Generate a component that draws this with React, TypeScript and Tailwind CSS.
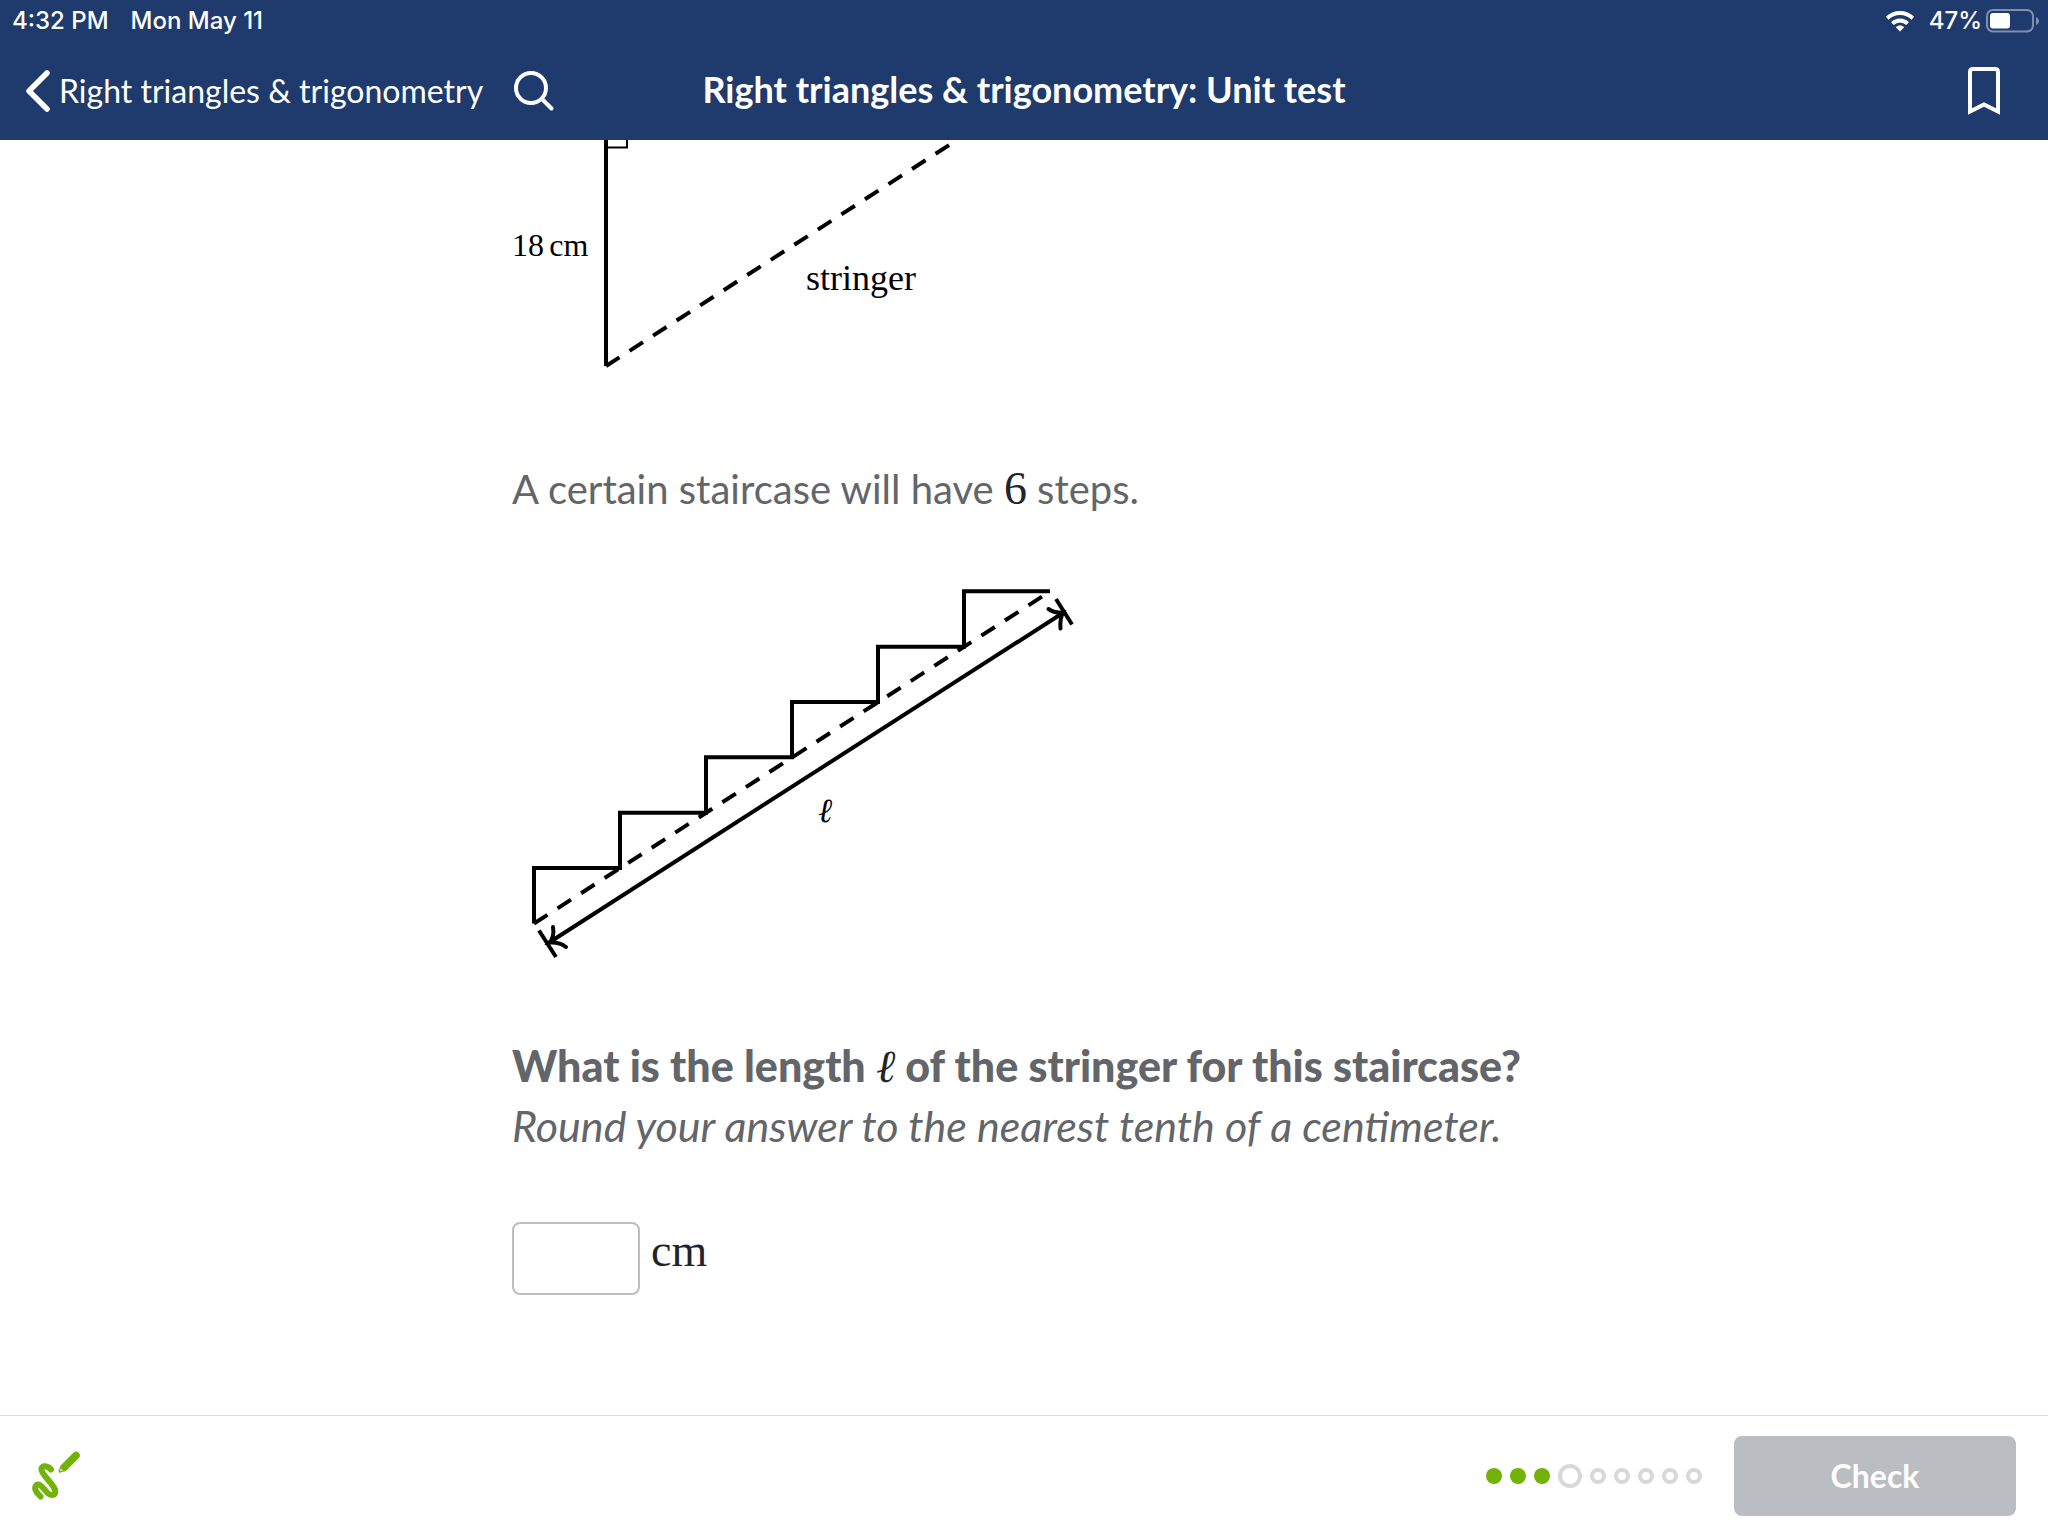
const steps = [0, 1, 2, 3, 4, 5];

const progress = ["done", "done", "done", "current", "todo", "todo", "todo", "todo", "todo"];

function StatusBar() {
  return (
    <div className="flex h-[42px] items-center justify-between pl-3 pr-2 font-[Inter,sans-serif] text-2xl font-medium leading-6">
      <div className="flex gap-[22px]">
        <span>4:32 PM</span>
        <span>Mon May 11</span>
      </div>
      <div className="flex items-center">
        <svg width="30" height="22" viewBox="0 0 30 22" fill="none" stroke="white" strokeWidth="4" aria-label="Wi-Fi">
          <path d="M2.200 8.200C9.300 1.300 20.700 1.300 27.800 8.200" />
          <path d="M7.400 13.600C11.700 9.500 18.300 9.500 22.600 13.600" />
          <path d="M10.800 17.200C13.200 15 16.800 15 19.200 17.200L15 21.500Z" fill="white" stroke="none" />
        </svg>
        <span className="ml-[14px] mr-1">47%</span>
        <svg width="54" height="24" viewBox="0 0 54 24" aria-label="Battery">
          <rect x="1" y="1" width="46" height="21.500" rx="6" fill="none" stroke="#7f8fb0" strokeWidth="2" />
          <rect x="4" y="4" width="20" height="15.500" rx="3" fill="white" />
          <path d="M50 8C54 9.500 54 14.500 50 16Z" fill="#7f8fb0" />
        </svg>
      </div>
    </div>
  );
}

function Header() {
  return (
    <header className="bg-[#1f3a6c] font-[Lato,sans-serif] text-white">
      <StatusBar />
      <div className="grid h-[98px] grid-cols-[1fr_auto_1fr] items-center px-6">
        <div className="flex items-center gap-7">
          <button className="flex items-center gap-[7px] text-[32px] leading-10">
            <svg width="28" height="44" viewBox="0 0 28 44" fill="none" stroke="white" strokeWidth="5.500" strokeLinecap="round" strokeLinejoin="round">
              <path d="M23 4L5 22L23 40" />
            </svg>
            Right triangles &amp; trigonometry
          </button>
          <button aria-label="Search">
            <svg width="44" height="44" viewBox="0 0 44 44" fill="none" stroke="white" strokeWidth="4" strokeLinecap="round">
              <circle cx="20" cy="19" r="15" />
              <path d="M31 30L40.500 39.500" />
            </svg>
          </button>
        </div>
        <h1 className="pb-1 text-4xl font-bold">Right triangles &amp; trigonometry: Unit test</h1>
        <button aria-label="Bookmark" className="justify-self-end pr-6">
          <svg width="32" height="48" viewBox="0 0 32 48" fill="none" stroke="white" strokeWidth="4">
            <path d="M2 44.500V5Q2 2 5 2H27Q30 2 30 5V44.500L16 37.500Z" />
          </svg>
        </button>
      </div>
    </header>
  );
}

function TriangleFigure() {
  return (
    <svg width="512" height="240" viewBox="0 0 512 240" className="block" stroke="black" fill="none" role="img" aria-label="Right triangle with an 18 cm leg and the stringer as its hypotenuse">
      <path d="M94 0V226" strokeWidth="4" />
      <path d="M94 7.500H115V0" strokeWidth="2" />
      <path d="M94 226L445 0" strokeWidth="4" strokeDasharray="16 12" />
      <g fill="black" stroke="none" fontFamily="'Liberation Serif', serif">
        <text x="0" y="116" fontSize="32">18&#8202;&#8202;cm</text>
        <text x="294" y="150" fontSize="36">stringer</text>
      </g>
    </svg>
  );
}

function StaircaseFigure() {
  const stairs = steps.map((i) => `V${(278 - 55.33 * i).toFixed(2)}H${108 + 86 * i}`).join("");
  return (
    <svg width="600" height="410" viewBox="0 -10 600 410" className="block" stroke="black" fill="none" strokeWidth="4" role="img" aria-label="Staircase with 6 steps and stringer length l">
      <path d={`M22 333.5${stairs}`} />
      <path d="M22 333.500L538 1.500" strokeDasharray="16 12" />
      <path d="M38 352L550 23.500" />
      <path d="M27 340.500L44 367" />
      <path d="M544 9L560 34.500" />
      <path d="M41 337C42 343.500 41 349 37.500 352.500C44 352 49 353 54 357" strokeLinecap="round" />
      <path d="M536.500 19C541.500 22.500 546 23 551 22.500C548.500 27 548 32 548.500 38.500" strokeLinecap="round" />
      <text x="306" y="232" fill="black" stroke="none" fontStyle="italic" fontFamily="'Liberation Serif', 'DejaVu Serif', serif" fontSize="34">ℓ</text>
    </svg>
  );
}

export default function App() {
  return (
    <div className="flex h-screen flex-col bg-white">
      <Header />
      <main className="min-h-0 flex-1 overflow-hidden">
        <div className="mx-auto w-full max-w-5xl font-[Lato,sans-serif] text-[43px] leading-[60px] text-[#626569]">
          <TriangleFigure />
          <p className="pt-[79px] text-[40px]">
            A certain staircase will have{" "}
            <span className="font-['Liberation_Serif',serif] text-[46px] leading-none text-[#21242c]">6</span> steps.
          </p>
          <div className="pt-[61px]">
            <StaircaseFigure />
          </div>
          <p className="whitespace-nowrap pt-[46px] font-black">
            What is the length{" "}
            <span className="font-['Liberation_Serif',serif] text-[46px] font-normal italic leading-none text-[#21242c]">ℓ</span> of the stringer for this staircase?
          </p>
          <p className="italic">Round your answer to the nearest tenth of a centimeter.</p>
          <label className="flex items-center gap-[11px] pt-[66px]">
            <input type="text" aria-label="Length in cm" className="h-[73px] w-32 rounded-lg border-2 border-[#bcbec0] bg-white px-3 text-4xl outline-none" />
            <span className="pb-4 font-['Liberation_Serif',serif] text-[46px] leading-none text-[#21242c]">cm</span>
          </label>
        </div>
      </main>
      <footer className="flex h-[121px] items-center justify-between border-t border-[#dcddde] px-8 font-[Lato,sans-serif]">
        <button aria-label="Scratchpad">
          <svg width="48" height="50" viewBox="0 0 48 50" fill="none" stroke="#71b307" strokeLinecap="round" strokeLinejoin="round">
            <path d="M19 18.500C16 15 9.500 13.500 9.500 18.500C9.500 24 23 34 23.300 40C23.300 45.500 18 44.500 15.500 42C12.500 38.500 8 32 4.500 34C1 37 5 42.500 8.500 45.500" strokeWidth="6" />
            <path d="M44 4.500L32 16.500" strokeWidth="7.500" />
            <path d="M29.200 14L26.500 19.500Q26.300 22 28.500 21.700L34.500 19Z" fill="#71b307" stroke="none" />
            <path d="M28.500 17.500L28.200 20L31 19.700Z" fill="white" stroke="none" />
          </svg>
        </button>
        <div className="flex items-center gap-8">
          <div className="flex items-center gap-2" role="img" aria-label="Question 4 of 9">
            {progress.map((state, i) => (
              <span
                key={i}
                className={
                  state === "done"
                    ? "size-4 rounded-full bg-[#71b307]"
                    : state === "current"
                      ? "size-6 rounded-full border-4 border-[#d8d8d9]"
                      : "size-4 rounded-full border-4 border-[#d8d8d9]"
                }
              />
            ))}
          </div>
          <button className="h-20 w-[282px] rounded-lg bg-[#babdc2] text-[32px] font-bold text-white">Check</button>
        </div>
      </footer>
    </div>
  );
}
